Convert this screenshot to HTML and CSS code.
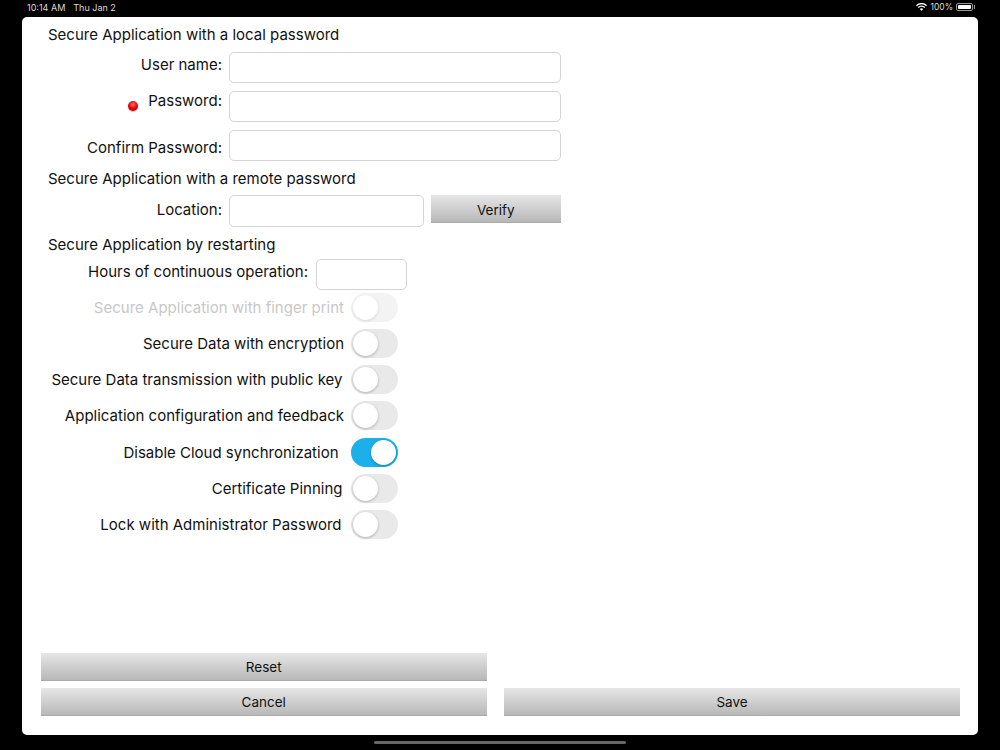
FILE: index.html
```html
<!doctype html>
<html lang="en">
  <head>
    <meta charset="UTF-8" />
    <title>Security Settings</title>
    <link rel="stylesheet" href="styles.css">
  </head>
  <body>
    <div class="statusBar">
      <div class="statusTime"><span>10:14 AM</span><span>Thu Jan 2</span></div>
      <div class="statusIcons">
        <svg class="wifi" width="11" height="8" viewBox="0 0 12 9">
          <path d="M0.3 3 A8 8 0 0 1 11.7 3" fill="none" stroke="#fff" stroke-width="1.5"/>
          <path d="M2.3 5 A5.2 5.2 0 0 1 9.7 5" fill="none" stroke="#fff" stroke-width="1.5"/>
          <path d="M6 8.8 L4 6.8 A2.8 2.8 0 0 1 8 6.8 Z" fill="#fff"/>
        </svg>
        <span class="batteryText">100%</span>
        <div class="battery"><div class="batteryFill"></div></div>
      </div>
    </div>

    <div class="sheet">
      <div class="heading">Secure Application with a local password</div>

      <div class="row">
        <label class="rowLabel raised">User name:</label>
        <input class="field wide" type="text">
      </div>
      <div class="row">
        <label class="rowLabel raisedMore"><span class="led"></span>Password:</label>
        <input class="field wide" type="password">
      </div>
      <div class="row">
        <label class="rowLabel lowered">Confirm Password:</label>
        <input class="field wide" type="password">
      </div>

      <div class="heading">Secure Application with a remote password</div>
      <div class="row locationRow">
        <label class="rowLabel">Location:</label>
        <input class="field location" type="text">
        <button class="grayBtn verify">Verify</button>
      </div>

      <div class="heading">Secure Application by restarting</div>
      <div class="row hoursRow">
        <label class="rowLabel hoursLabel">Hours of continuous operation:</label>
        <input class="field hours" type="text">
      </div>

      <div class="switches">
        <div class="switchRow disabled">
          <label class="switchLabel">Secure Application with finger print</label>
          <input class="switch" type="checkbox" disabled>
        </div>
        <div class="switchRow">
          <label class="switchLabel">Secure Data with encryption</label>
          <input class="switch" type="checkbox">
        </div>
        <div class="switchRow">
          <label class="switchLabel inset8">Secure Data transmission with public key</label>
          <input class="switch" type="checkbox">
        </div>
        <div class="switchRow">
          <label class="switchLabel">Application configuration and feedback</label>
          <input class="switch" type="checkbox">
        </div>
        <div class="switchRow cloudRow">
          <label class="switchLabel inset12">Disable Cloud synchronization</label>
          <input class="switch" type="checkbox" checked>
        </div>
        <div class="switchRow">
          <label class="switchLabel inset8">Certificate Pinning</label>
          <input class="switch" type="checkbox">
        </div>
        <div class="switchRow">
          <label class="switchLabel inset9">Lock with Administrator Password</label>
          <input class="switch" type="checkbox">
        </div>
      </div>

      <div class="footer">
        <button class="grayBtn">Reset</button>
        <span></span>
        <button class="grayBtn">Cancel</button>
        <button class="grayBtn">Save</button>
      </div>
    </div>

    <div class="homeBar"></div>
  </body>
</html>
```

FILE: styles.css
```css
* {
  box-sizing: border-box;
}

body {
  margin: 0;
  height: 750px;
  overflow: hidden;
  background: #000;
  font-family: 'Inter', 'Liberation Sans', sans-serif;
  font-size: 15px;
  color: #111;
}

.statusBar {
  height: 17px;
  display: flex;
  justify-content: space-between;
  align-items: center;
  padding: 0 27px 3px 27px;
  color: #ddd;
  font-size: 9px;
}
.statusTime {
  display: flex;
  gap: 8px;
}
.statusIcons {
  display: flex;
  align-items: center;
  gap: 3px;
}
.batteryText {
  font-size: 8.5px;
}
.battery {
  position: relative;
  width: 17px;
  height: 8px;
  padding: 1px;
  border: 1px solid #999;
  border-radius: 2px;
}
.batteryFill {
  height: 100%;
  background: #fff;
  border-radius: 1px;
}
.battery:after {
  content: "";
  position: absolute;
  right: -3px;
  top: 1px;
  width: 1px;
  height: 4px;
  background: #999;
}

.sheet {
  display: flex;
  flex-direction: column;
  width: 956px;
  height: 718px;
  margin-left: 22px;
  background: #fff;
  border-radius: 5px;
}

.heading {
  height: 20px;
  line-height: 21px;
  margin: 7px 0 0 26px;
}

.row {
  display: flex;
  align-items: center;
  height: 31px;
  margin-top: 8px;
}
.rowLabel {
  display: flex;
  justify-content: flex-end;
  align-items: center;
  width: 200px;
  margin-right: 7px;
}
.raised {
  margin-bottom: 7px;
}
.raisedMore {
  margin-bottom: 13px;
}
.lowered {
  margin-top: 3px;
}
.led {
  width: 10px;
  height: 10px;
  margin: 12px 10px 0 0;
  border-radius: 50%;
  background: radial-gradient(circle at 50% 35%, #f66, #e00000 55%, #a00);
  box-shadow: 0 1px 1px rgba(0, 0, 0, .3);
}

.field {
  height: 100%;
  margin: 0;
  padding: 0 8px;
  border: 1px solid #d4d4d4;
  border-radius: 5px;
  background: #fff;
  outline: none;
}
.wide {
  width: 331.5px;
}

.locationRow {
  align-items: flex-start;
  height: 32px;
  margin-top: 7px;
}
.locationRow .rowLabel {
  height: 29px;
}
.location {
  width: 194.5px;
}

.hoursRow {
  margin-top: 5px;
}
.hoursLabel {
  width: 286px;
  margin-right: 8px;
  margin-bottom: 6px;
}
.hours {
  width: 90.5px;
}

.switches {
  display: flex;
  flex-direction: column;
  gap: 7px;
  margin-top: 3px;
}
.switchRow {
  display: flex;
  align-items: center;
  height: 29px;
}
.cloudRow {
  margin-top: 1px;
}
.switchLabel {
  width: 328.5px;
  padding-right: 6.5px;
  text-align: right;
}
.inset8 {
  padding-right: 8px;
}
.inset9 {
  padding-right: 9px;
}
.inset12 {
  padding-right: 12px;
}
.disabled .switchLabel {
  color: #c8c8c8;
}

.switch {
  -webkit-appearance: none;
  appearance: none;
  position: relative;
  width: 47px;
  height: 29px;
  margin: 0;
  border-radius: 15px;
  background: #e9e9ea;
}
.switch:after {
  content: "";
  position: absolute;
  left: 2px;
  top: 2px;
  width: 25px;
  height: 25px;
  border-radius: 50%;
  background: #fff;
  box-shadow: 0 1px 3px rgba(0, 0, 0, .25);
}
.switch:checked {
  background: #1cb0ea;
}
.switch:checked:after {
  left: 20px;
}
.switch:disabled {
  opacity: .5;
}

.grayBtn {
  margin: 0;
  padding: 0;
  border: 0;
  border-bottom: 1px solid #aaa;
  background: linear-gradient(#e6e6e6, #b8b8b8);
  font: inherit;
  font-size: 13.5px;
  color: #111;
}
.verify {
  width: 129.5px;
  height: 28px;
  margin-left: 7.5px;
  padding-top: 2px;
}

.footer {
  display: grid;
  grid-template-columns: 446.5px 456px;
  grid-auto-rows: 28px;
  column-gap: 17px;
  row-gap: 7px;
  margin: auto 0 19px 18.5px;
}

.homeBar {
  width: 252px;
  height: 3px;
  margin: 6px auto 0;
  border-radius: 2px;
  background: #666;
}
```
